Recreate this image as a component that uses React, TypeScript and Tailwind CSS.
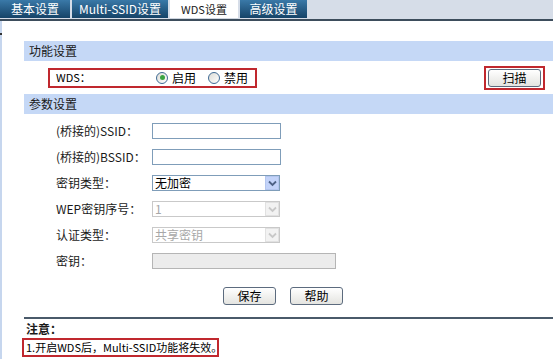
import React from "react";

const font = { fontFamily: '"Noto Sans CJK SC", "Liberation Sans", sans-serif' };

function Tab({ label, active, w }: { label: string; active?: boolean; w: string }) {
  return (
    <div
      className={
        active
          ? `${w} h-[19px] flex items-center justify-center bg-white text-[#1a1a1a] text-[11px] border-b border-[#cfd6e0]`
          : `${w} h-[18px] flex items-center justify-center bg-gradient-to-b from-[#3a79a8] to-[#164468] text-white text-[12px]`
      }
    >
      {label}
    </div>
  );
}

function Chevron({ disabled }: { disabled?: boolean }) {
  return (
    <svg width="9" height="7" viewBox="0 0 9 7">
      <path
        d="M1 1.5 L4.5 5 L8 1.5"
        fill="none"
        stroke={disabled ? "#c8c8c8" : "#4d6185"}
        strokeWidth="1.8"
      />
    </svg>
  );
}

function Select({ value, disabled }: { value: string; disabled?: boolean }) {
  return (
    <div
      className={`w-[128px] h-[16px] flex items-center border ${
        disabled ? "border-[#c9c9c9] text-[#a8a8a8]" : "border-[#7f9db9] text-black"
      } bg-white`}
    >
      <span className="flex-1 pl-[2px] text-[12px] leading-none">{value}</span>
      <div
        className={`w-[14px] h-[14px] mr-[0px] flex items-center justify-center ${
          disabled ? "bg-[#f2f2f2] border border-[#e1e1e1]" : "bg-[#c3d3f9] border border-[#b4c6ee]"
        }`}
      >
        <Chevron disabled={disabled} />
      </div>
    </div>
  );
}

function Row({ label, children }: { label: string; children: React.ReactNode }) {
  return (
    <div className="h-[26px] flex items-center">
      <div className="w-[96px] pl-[32px] box-content text-[12px] text-[#1a1a1a] whitespace-nowrap">{label}</div>
      {children}
    </div>
  );
}

function Btn({ label }: { label: string }) {
  return (
    <div className="w-[53px] h-[18px] flex items-center justify-center rounded-[3px] border border-[#5c6b7e] bg-gradient-to-b from-white to-[#e4e4e0] text-[12px] text-black">
      {label}
    </div>
  );
}

function Radio({ checked }: { checked?: boolean }) {
  return (
    <div className="w-[12px] h-[12px] rounded-full border border-[#3f6a94] bg-gradient-to-br from-[#dcdcd6] to-white flex items-center justify-center">
      {checked && <div className="w-[5px] h-[5px] rounded-full bg-[#3aa443]" />}
    </div>
  );
}

export default function App() {
  return (
    <div className="w-[553px] h-[359px] bg-white overflow-hidden relative" style={font}>
      <div className="h-[19px] flex items-start bg-[#d6dde8] border-b-[2px] border-[#3d4d5c] box-content">
        <Tab label="基本设置" w="w-[70px]" />
        <div className="w-[2px]" />
        <Tab label="Multi-SSID设置" w="w-[96px]" />
        <div className="w-[2px]" />
        <Tab label="WDS设置" w="w-[68px]" active />
        <div className="w-[2px]" />
        <Tab label="高级设置" w="w-[67px]" />
      </div>
      <div className="absolute left-0 top-[33px] w-[2px] h-[2px] bg-[#333]" />
      <div className="flex">
        <div className="w-[2px] h-[338px] bg-[#c6d6ee]" />
        <div className="flex-1 pl-[22px] pt-[20px]">
          <div className="h-[20px] bg-[#c5d8f6] flex items-center pl-[5px] text-[12px] text-[#1a1a1a]">功能设置</div>
          <div className="h-[33px] flex items-center">
            <div className="ml-[24px] w-[209px] h-[20px] border-2 border-[#c0282e] flex items-center text-[12px]">
              <span className="pl-[6px] w-[106px] text-[11px]">WDS：</span>
              <Radio checked />
              <span className="ml-[4px]">启用</span>
              <div className="ml-[12px]">
                <Radio />
              </div>
              <span className="ml-[4px]">禁用</span>
            </div>
            <div className="ml-auto mr-[8px] w-[61px] h-[24px] border-2 border-[#c0282e] flex items-center justify-center">
              <Btn label="扫描" />
            </div>
          </div>
          <div className="h-[20px] bg-[#c5d8f6] flex items-center pl-[5px] text-[12px] text-[#1a1a1a]">参数设置</div>
          <div className="pt-[4px]">
            <Row label="(桥接的)SSID：">
              <div className="w-[129px] h-[16px] border border-[#7f9db9] bg-white" />
            </Row>
            <Row label="(桥接的)BSSID：">
              <div className="w-[129px] h-[16px] border border-[#7f9db9] bg-white" />
            </Row>
            <Row label="密钥类型：">
              <Select value="无加密" />
            </Row>
            <Row label="WEP密钥序号：">
              <Select value="1" disabled />
            </Row>
            <Row label="认证类型：">
              <Select value="共享密钥" disabled />
            </Row>
            <Row label="密钥：">
              <div className="w-[184px] h-[16px] border border-[#b5b5b5] bg-[#ececec]" />
            </Row>
          </div>
          <div className="flex gap-[14px] pl-[199px] pt-[13px]">
            <Btn label="保存" />
            <Btn label="帮助" />
          </div>
          <div className="mt-[12px] h-[2px] bg-[#4a5a6a]" />
          <div className="pt-[3px] pl-[2px] text-[12px] font-bold text-[#1a1a1a] leading-[14px]">注意：</div>
          <div className="-ml-[2px] mt-[2px] w-[197px] h-[19px] border-2 border-[#c0282e] flex items-center pl-[2px] text-[11px] text-black whitespace-nowrap">
            1.开启WDS后，Multi-SSID功能将失效。
          </div>
        </div>
      </div>
    </div>
  );
}
